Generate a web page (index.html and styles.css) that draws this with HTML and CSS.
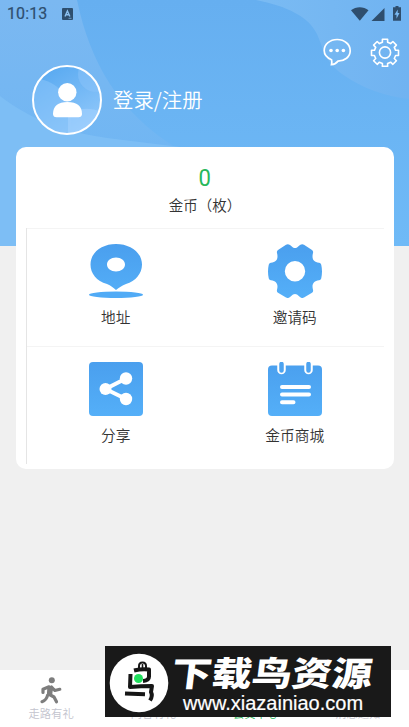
FILE: index.html
```html
<!DOCTYPE html>
<html lang="zh-CN">
<head>
<meta charset="utf-8">
<meta name="viewport" content="width=device-width, initial-scale=1">
<title>会员中心</title>
<link rel="stylesheet" href="styles.css">
</head>
<body>
<div class="screen">
  <header class="header">
    <svg class="header-bg" viewBox="0 0 409 246" preserveAspectRatio="none">
      <defs>
        <linearGradient id="sky" x1="0" y1="0" x2="0" y2="1"><stop offset="0" stop-color="#66aff0"/><stop offset="1" stop-color="#6fbaf7"/></linearGradient>
        <linearGradient id="left" x1="0" y1="0" x2="0" y2="1"><stop offset="0" stop-color="#7bb8f1"/><stop offset=".65" stop-color="#70b6f3"/><stop offset="1" stop-color="#76bdf6"/></linearGradient>
        <linearGradient id="right" x1="0" y1="0" x2="1" y2="0"><stop offset="0" stop-color="#7abbf3"/><stop offset="1" stop-color="#70b3f1"/></linearGradient>
      </defs>
      <path fill="url(#sky)" d="M0 0h409v246H0z"/>
      <path fill="url(#left)" d="M0 0h77C90 62 118 111 175 147v99H0z"/>
      <path fill="#7dbef5" d="M0 96C30 119 64 133 115 139l65 8v99H0z"/>
      <path fill="url(#right)" d="M256 0c31 6 53 17 61 34 7 16 7 26 25 40 21 15 43 22 67 25V0z"/>
    </svg>
    <div class="status">
      <span class="clock">10:13</span>
      <svg class="status-app" viewBox="0 0 11 12"><rect width="11" height="12" rx="1" fill="#2e4e6e"/><path d="M3 8.500 5.400 3l2.500 5.500M3.800 6.800H7" fill="none" stroke="#8bc0f0" stroke-width="1.400"/><path d="M6.500 10.300h3" stroke="#8bc0f0" stroke-width=".7"/></svg>
      <svg class="status-right" viewBox="0 0 52 16"><g fill="#2e4e6e"><path d="M0 4.200C5 .2 12.500.2 17.500 4.200L8.800 14.700z"/><path d="M33.500 2v13H20.500z"/><path d="M42.500 1.300h2V0h3v1.300h2.500v13.500h-8V1.300z"/></g><path d="M46.700 3.500 43.500 8.700h2v4l3-5.700h-1.800z" fill="#79b9f3"/></svg>
    </div>
    <div class="actions">
      <svg class="action" viewBox="0 0 30 30"><path d="M9.500 22.700C5.300 21 2.200 17.500 2.200 13.500 2.200 7.200 7.900 2.500 15.200 2.500s13 4.900 13 11.300c0 6.200-5.600 10.200-12.200 10.300-1.600 2-3.700 3.300-6.500 3.500.5-1.800.5-3.300 0-4.900z" fill="none" stroke="#fff" stroke-width="1.700"/><g fill="#fff"><circle cx="9" cy="13.500" r="1.800"/><circle cx="15.200" cy="13.500" r="1.800"/><circle cx="21.400" cy="13.500" r="1.800"/></g></svg>
      <svg class="action" viewBox="0 0 30 30"><g fill="none" stroke="#fff" stroke-width="1.600" stroke-linejoin="round"><path d="M12.400 2.300h5.200v3l3 1.300 2.300-2.100 3.500 3.600-2.100 2.300 1.300 2.900h2.900v5.200h-2.900l-1.300 3 2.100 2.200-3.500 3.600-2.300-2.100-3 1.300v2.900h-5.200v-2.900l-3-1.300-2.200 2.100-3.600-3.600 2.100-2.200-1.300-3h-2.900v-5.200h2.900l1.300-2.900-2.100-2.300 3.600-3.600 2.200 2.100 3-1.300z"/><circle cx="15" cy="15.500" r="5.600"/></g></svg>
    </div>
    <div class="profile">
      <svg class="avatar" viewBox="0 0 70 70">
        <defs><linearGradient id="av" x1=".2" y1="0" x2=".8" y2="1"><stop offset="0" stop-color="#56a8f0"/><stop offset="1" stop-color="#94cafb"/></linearGradient><clipPath id="disc"><circle cx="35" cy="35" r="34"/></clipPath></defs>
        <g clip-path="url(#disc)"><path fill="url(#av)" d="M0 0h70v70H0z"/><path d="M8 14c23 5 33 23 31 56H0V14z" fill="#8bc4f9" opacity=".55"/><circle cx="64" cy="9" r="18" fill="#8bc4f9" opacity=".5"/><path d="M36 48c14-6 24-5 34-1v23H36z" fill="#a7d4ff" opacity=".5"/></g>
        <circle cx="35" cy="35" r="34" fill="none" stroke="#fff" stroke-width="2"/>
        <circle cx="35.300" cy="27.300" r="9.200" fill="#fff"/><path d="M21 49c0-8 5-12 14.500-12S50 41 50 49c0 2-1.500 3.300-3.500 3.300h-22C22.300 52.300 21 51 21 49z" fill="#fff"/>
      </svg>
      <span class="login">登录/注册</span>
    </div>
  </header>

  <main class="card">
    <div class="coins"><span class="count">0</span><span class="unit">金币（枚）</span></div>
    <div class="grid">
      <div class="cell">
        <svg class="icon" viewBox="0 0 54 54"><defs><linearGradient id="blue" gradientUnits="userSpaceOnUse" x1="0" y1="0" x2="0" y2="54"><stop offset="0" stop-color="#4a9fee"/><stop offset="1" stop-color="#54aff8"/></linearGradient></defs><path fill="url(#blue)" fill-rule="evenodd" d="M27 0c14.500 0 26 8.600 26 20.500 0 9-6.200 16.500-16 19.500-4 1.500-7 3.500-10 6-3-2.500-5-4.500-9-6C7.500 37 1.500 29.500 1.500 20.500 1.500 8.600 12.500 0 27 0zm0 13.500c-5 0-9 3-9 7s4 7 9 7 9-3 9-7-4-7-9-7z"/><ellipse cx="27" cy="50.800" rx="27" ry="3.200" fill="#51abf6"/></svg>
        <span>地址</span>
      </div>
      <div class="cell">
        <svg class="icon" viewBox="0 0 54 54"><path fill="url(#blue)" fill-rule="evenodd" d="M10 6 18 .7q2-1.200 4 .4l3 2.300q2 1.400 4 0L32 1.100q2-1.600 4-.4L44 6q1.500 1 1 3c-1.500 6 .5 9 6 9.800 1.500.2 2 1 2.300 2.300q1.400 6.400 0 12.800c-.3 1.300-.8 2.100-2.300 2.300-5.500.8-7.500 4-6 9.600q.5 2-1 3l-8 4.700q-2 1.200-4-.4l-3-2.500q-2-1.400-4 0l-3 2.500q-2 1.600-4 .4l-8-4.700q-1.500-1-1-3c1.500-5.600-.5-8.800-6-9.600-1.500-.2-2-1-2.300-2.300q-1.400-6.400 0-12.800C1 19.800 1.500 19 3 18.800c5.500-.8 7.500-3.800 6-9.800q-.5-2 1-3zM27 17a10.200 10.200 0 1 0 0 20.400A10.200 10.200 0 0 0 27 17z"/></svg>
        <span>邀请码</span>
      </div>
      <div class="cell">
        <svg class="icon" viewBox="0 0 54 54"><rect width="54" height="54" rx="4" fill="url(#blue)"/><path d="M37 16.500 16.500 27 37 37" fill="none" stroke="#fff" stroke-width="4"/><g fill="#fff"><circle cx="16.500" cy="27" r="6"/><circle cx="37" cy="16.500" r="6.200"/><circle cx="37" cy="37" r="6.200"/></g></svg>
        <span>分享</span>
      </div>
      <div class="cell">
        <svg class="icon" viewBox="0 0 54 54"><rect y="3.500" width="54" height="50.500" rx="4" fill="url(#blue)"/><path d="M13.500-1v9M40.500-1v9" stroke="#fff" stroke-width="8.500" stroke-linecap="round"/><path d="M13.500 2v6.500M40.500 2v6.500" stroke="#4da3f0" stroke-width="4.500" stroke-linecap="round"/><path d="M14 25h27M14 32.500h27M14 40.300h11.500" stroke="#fff" stroke-width="4" stroke-linecap="round"/></svg>
        <span>金币商城</span>
      </div>
    </div>
  </main>

  <nav class="tabs">
    <div class="tab">
      <svg class="tab-icon" viewBox="0 0 24 28"><circle cx="12.800" cy="3.300" r="3" fill="#7d7d7d"/><path d="M4 15.500v-3.300l6-2.400L9.500 17l5.500 3 2.500 4.800M12.500 10l3.300 3.500 5-1.200M8.500 18.500c-.7 3-2.700 5.200-5.500 6.200M12.500 10l-.8 7" fill="none" stroke="#7d7d7d" stroke-width="3.200" stroke-linecap="round" stroke-linejoin="round"/></svg>
      <span>走路有礼</span>
    </div>
    <div class="tab"><i class="tab-icon"></i><span>问答有礼</span></div>
    <div class="tab active"><i class="tab-icon"></i><span>会员中心</span></div>
    <div class="tab"><i class="tab-icon"></i><span>消息通知</span></div>
  </nav>

  <div class="banner">
    <svg class="emblem" viewBox="0 0 60 60"><circle cx="30" cy="30" r="29.300" fill="#fff"/><g fill="none" stroke="#161616" stroke-width="4" stroke-linejoin="round"><path d="M30 15.500V13q0-3.500 3.500-3.500T37 13v3" stroke-width="2"/><path d="M33.500 11v5" stroke-width="1.600"/><path d="M25 17.500q8-2 15-1v7q0 4-6 4.500M21.500 21l-.5 13q11-1 22-1l-1 6q2 4-1 8.500M16 40.500l20 .8"/></g><circle cx="29.500" cy="25.500" r="4.500" fill="#20df5d"/></svg>
    <div class="banner-copy"><strong>下载鸟资源</strong><span>www.xiazainiao.com</span></div>
  </div>
</div>
</body>
</html>
```
FILE: styles.css
```css
* { box-sizing: border-box; }
body { margin: 0; background: #f0f0f0; font-family: "Noto Sans CJK SC", sans-serif; font-weight: 350; color: #333; }
svg { display: block; flex-shrink: 0; }
.screen { position: relative; display: flex; flex-direction: column; height: 727px; overflow: hidden; }
.header { position: relative; height: 246px; flex-shrink: 0; }
.header-bg { position: absolute; inset: 0; z-index: -1; width: 100%; height: 100%; }
.status { display: flex; align-items: center; height: 28px; padding: 0 6px 0 7px; }
.clock { font: 400 16px/28px Roboto, sans-serif; color: #2e4e6e; letter-spacing: .1px; -webkit-text-stroke: .2px #2e4e6e; }
.status-app { width: 11px; height: 12px; margin-left: 15px; }
.status-right { width: 52px; height: 16px; margin-left: auto; }
.actions { display: flex; justify-content: flex-end; gap: 18px; padding: 9px 9px 0 0; }
.action { width: 30px; height: 30px; }
.profile { display: flex; align-items: center; gap: 11px; margin: -2px 0 0 32px; }
.avatar { width: 70px; height: 70px; }
.login { font-size: 20.400px; line-height: 30px; margin-top: -2px; color: #fff; }
.card { position: relative; height: 322px; margin: -99px 15px 0 16px; padding: 0 10px 5px; background: #fff; border-radius: 10px; flex-shrink: 0; }
.coins { display: flex; flex-direction: column; align-items: center; height: 81px; padding-top: 17px; }
.count { font: 24px/28px Roboto, sans-serif; color: #28b85b; transform: scaleX(.92); }
.unit { font-size: 14.500px; line-height: 24px; margin-top: 1px; }
.grid { display: grid; grid-template-columns: 1fr 1fr; grid-template-rows: 118px 118px; border-left: 1px solid #e5e5e5; }
.cell { display: flex; flex-direction: column; align-items: center; border-top: 1px solid #f4f4f4; padding: 15px 1px 0 0; font-size: 14.700px; line-height: 22px; }
.cell:nth-child(even) { padding-right: 0; }
.icon { width: 54px; height: 54px; margin-bottom: 8px; overflow: hidden; }
.tabs { display: grid; grid-template-columns: repeat(4, 1fr); height: 57px; margin-top: auto; background: #fff; }
.tab { display: flex; flex-direction: column; align-items: center; padding-top: 7px; font-size: 11.300px; line-height: 16px; color: #c3c4ce; }
.tab-icon { width: 24px; height: 28px; }
.active { color: #28b85b; }
.banner { position: absolute; left: 105px; top: 646px; display: flex; width: 286px; height: 71px; padding: 7px 0 0 4px; background: #191919; color: #fff; }
.emblem { width: 60px; height: 60px; }
.banner-copy { display: flex; flex-direction: column; padding-left: 3px; }
.banner-copy strong { font-size: 34px; line-height: 38px; font-weight: 900; white-space: nowrap; transform: scaleX(1.180) skewX(-6deg); transform-origin: left; }
.banner-copy span { font: 20px/22px "Liberation Sans", sans-serif; margin: 1px 0 0 11px; -webkit-text-stroke: .2px #fff; white-space: nowrap; }
```
